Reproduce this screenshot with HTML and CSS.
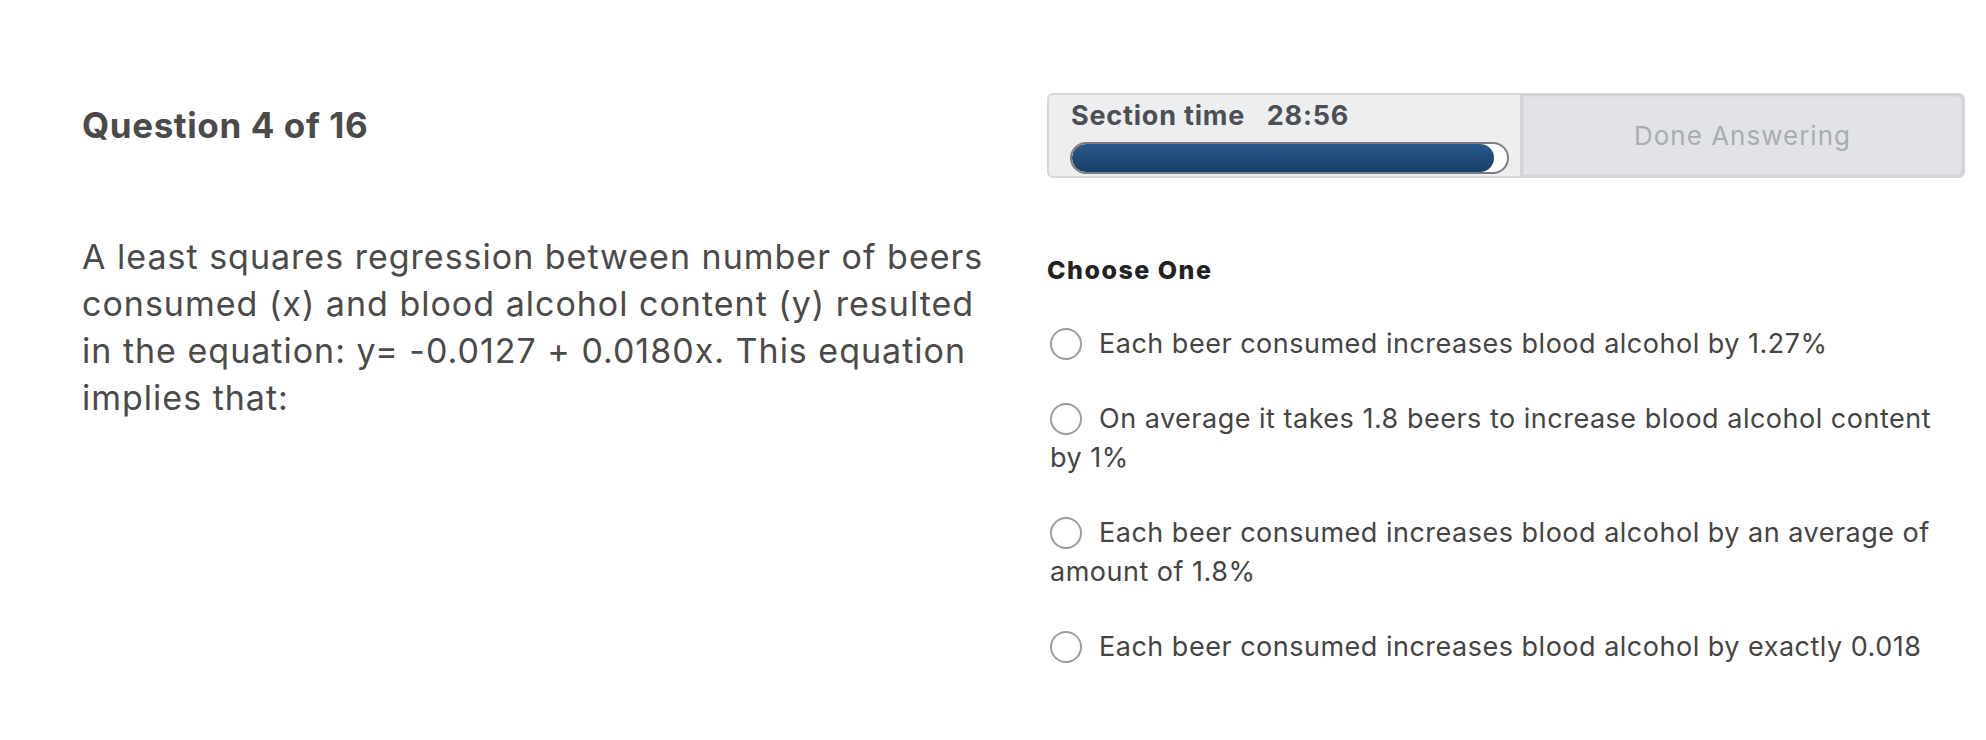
FILE: index.html
```html
<!DOCTYPE html>
<html>
<head>
<meta charset="utf-8">
<link rel="stylesheet" href="styles.css">
</head>
<body>
<div class="page">
  <section class="left">
    <h1 class="title">Question 4 of 16</h1>
    <p class="question">A least squares regression between number of beers consumed (x) and blood alcohol content (y) resulted in the equation: y= -0.0127 + 0.0180x. This equation implies that:</p>
  </section>
  <section class="right">
    <div class="timer">
      <div class="timer-info">
        <div class="timer-label">Section time&nbsp;&nbsp;&nbsp;28:56</div>
        <div class="bar"><div class="bar-fill"></div></div>
      </div>
      <button class="done">Done Answering</button>
    </div>
    <div class="choose">Choose One</div>
    <div class="options">
      <label class="option"><span class="radio"></span>Each beer consumed increases blood alcohol by 1.27%</label>
      <label class="option"><span class="radio"></span>On average it takes 1.8 beers to increase blood alcohol content by 1%</label>
      <label class="option"><span class="radio"></span>Each beer consumed increases blood alcohol by an average of amount of 1.8%</label>
      <label class="option"><span class="radio"></span>Each beer consumed increases blood alcohol by exactly 0.018</label>
    </div>
  </section>
</div>
</body>
</html>
```

FILE: styles.css
```css
* { box-sizing: border-box; }
html, body { margin: 0; padding: 0; background: #ffffff; }
body {
  font-family: Inter, "Noto Sans", sans-serif;
  color: #444;
}

.page {
  display: grid;
  grid-template-columns: 916px 918px;
  column-gap: 49px;
  padding: 93px 21px 0 82px;
}

.title {
  margin: 0;
  padding-top: 12px;
  font-size: 35px;
  line-height: 40px;
  letter-spacing: 0.6px;
  font-weight: 700;
  color: #4a4a4a;
}

.question {
  margin: 88px 0 0 0;
  font-size: 34px;
  line-height: 47px;
  letter-spacing: 1px;
  color: #4a4a4a;
}

.timer {
  display: flex;
  height: 85px;
  background: #edeef0;
  border: 2px solid #d5d7da;
  border-radius: 6px;
}

.timer-info {
  width: 471px;
  padding: 5px 0 0 21px;
  display: flex;
  flex-direction: column;
}

.timer-label {
  font-size: 27px;
  line-height: 32px;
  letter-spacing: 0.8px;
  font-weight: 700;
  color: #4c5055;
  padding-left: 1px;
}

.bar {
  margin-top: 10px;
  width: 439px;
  height: 32px;
  border: 2px solid #7b7d80;
  border-radius: 16px;
  background: #ffffff;
  overflow: hidden;
}

.bar-fill {
  width: 422px;
  height: 100%;
  border-radius: 14px;
  background: linear-gradient(to bottom, #255b8b, #1a3e66);
}

.done {
  flex: 1;
  margin: -2px -2px -2px 0;
  border: 3px solid #d3d4d7;
  border-radius: 0 9px 9px 0;
  background: #e2e3e6;
  font-family: inherit;
  font-size: 26px;
  letter-spacing: 1px;
  color: #a9adb1;
  padding: 0;
  box-shadow: inset 0 0 0 1px #dcdde0;
}

.choose {
  margin-top: 77px;
  font-size: 25px;
  line-height: 30px;
  letter-spacing: 1.5px;
  font-weight: 800;
  color: #222;
}

.options {
  margin-top: 39px;
  display: flex;
  flex-direction: column;
  gap: 36px;
  padding-left: 3px;
  padding-right: 22px;
}

.option {
  display: block;
  font-size: 27px;
  line-height: 39px;
  letter-spacing: 0.5px;
  color: #444;
}

.radio {
  display: inline-block;
  width: 32px;
  height: 32px;
  border: 2px solid #9a9da1;
  border-radius: 50%;
  vertical-align: -7px;
  margin-right: 17px;
  background: #fff;
}
```
